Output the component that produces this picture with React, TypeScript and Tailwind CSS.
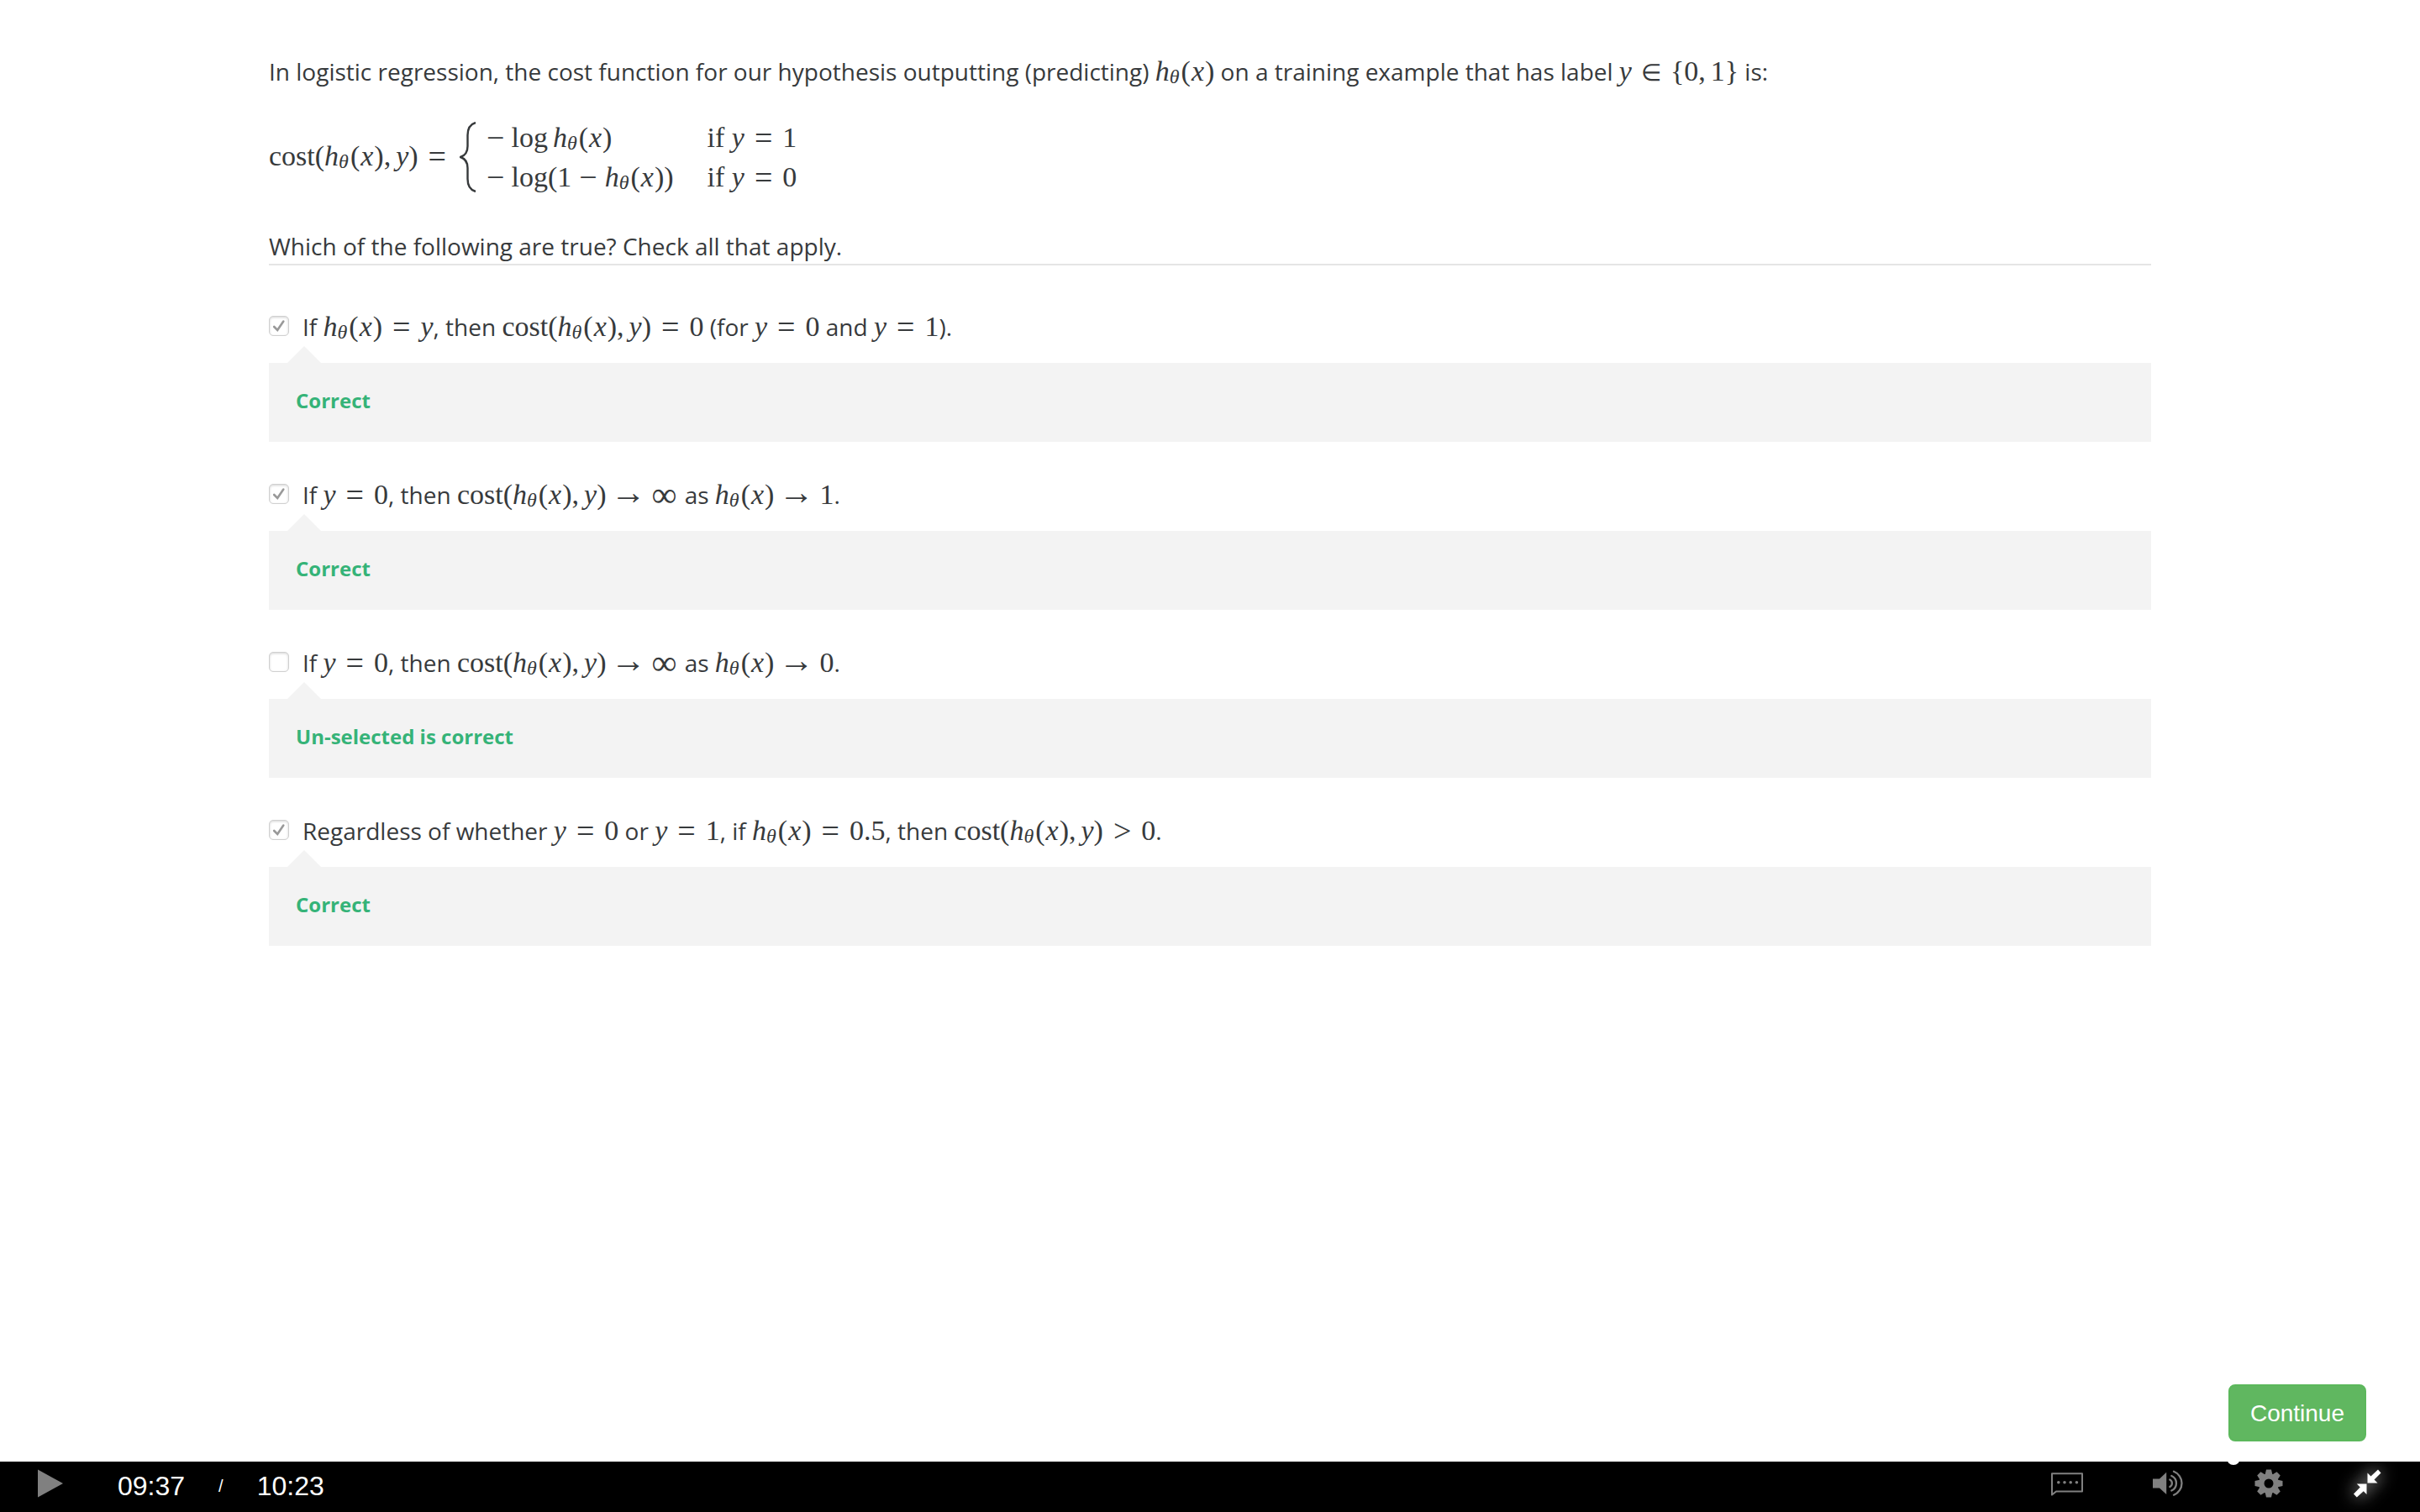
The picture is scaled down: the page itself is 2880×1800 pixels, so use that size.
import React, { useState } from "react";

type Children = { children: React.ReactNode };

const Tex = ({ children }: Children) => (
  <span className="whitespace-nowrap font-['Liberation_Serif',serif] text-[34px] leading-none">{children}</span>
);

const Rel = ({ children }: Children) => (
  <span className="mx-[12px] align-[-2px] text-[38px] leading-[0]">{children}</span>
);

const Arrow = () => <span className="mr-[7px] ml-[5px] text-[42px] leading-[0]">→</span>;

const Infinity = () => <span className="mr-[2px] align-[-3px] text-[42px] leading-[0]">∞</span>;

const Y = () => <i>y</i>;

// h_θ(x)
const Hyp = () => (
  <>
    <i>h</i>
    <sub className="bottom-[-3px] mr-[2px] text-[24px] leading-none italic">θ</sub>(<i className="mx-[1px]">x</i>)
  </>
);

const Cost = () => (
  <>
    cost(
    <Hyp />,<span className="ml-[6px]"><Y /></span>)
  </>
);

const Minus = () => <span className="mr-[8px] align-[-2px] text-[38px] leading-[0]">−</span>;

const Brace = () => (
  <svg className="ml-[16px] mr-[12px] h-[84px] w-[20px] shrink-0" viewBox="0 0 20 84" fill="none" aria-hidden="true">
    <path
      d="M19 1C12 3 9.500 8 9.500 16V29C9.500 36 7 40 1 42C7 44 9.500 48 9.500 55V68C9.500 76 12 81 19 83"
      stroke="#373a3c"
      strokeWidth="2.400"
    />
  </svg>
);

type Option = { id: string; checked: boolean; body: React.ReactNode; feedback: string };

const options: Option[] = [
  {
    id: "a",
    checked: true,
    feedback: "Correct",
    body: (
      <>
        If <Tex><Hyp /><Rel>=</Rel><Y /></Tex>, then <Tex><Cost /><Rel>=</Rel>0</Tex> (for{" "}
        <Tex><Y /><Rel>=</Rel>0</Tex> and <Tex><Y /><Rel>=</Rel>1</Tex>).
      </>
    ),
  },
  {
    id: "b",
    checked: true,
    feedback: "Correct",
    body: (
      <>
        If <Tex><Y /><Rel>=</Rel>0</Tex>, then <Tex><Cost /><Arrow /><Infinity /></Tex> as <Tex><Hyp /><Arrow />1</Tex>.
      </>
    ),
  },
  {
    id: "c",
    checked: false,
    feedback: "Un-selected is correct",
    body: (
      <>
        If <Tex><Y /><Rel>=</Rel>0</Tex>, then <Tex><Cost /><Arrow /><Infinity /></Tex> as <Tex><Hyp /><Arrow />0</Tex>.
      </>
    ),
  },
  {
    id: "d",
    checked: true,
    feedback: "Correct",
    body: (
      <>
        Regardless of whether <Tex><Y /><Rel>=</Rel>0</Tex> or <Tex><Y /><Rel>=</Rel>1</Tex>, if{" "}
        <Tex><Hyp /><Rel>=</Rel>0.5</Tex>, then <Tex><Cost /><Rel>&gt;</Rel>0</Tex>.
      </>
    ),
  },
];

function Answer({ option }: { option: Option }) {
  const [checked, setChecked] = useState(option.checked);
  return (
    <li className="mb-[43px]">
      <div className="flex gap-4">
        <span className="relative mt-[7px] size-6 shrink-0">
          <input
            id={option.id}
            type="checkbox"
            checked={checked}
            onChange={() => setChecked(!checked)}
            className="block size-6 appearance-none rounded-[5px] border border-[#d0d0d0] bg-white shadow-[inset_0_1px_3px_rgba(0,0,0,0.18)]"
          />
          {checked && (
            <svg className="pointer-events-none absolute inset-0 size-6" viewBox="0 0 24 24" fill="none" aria-hidden="true">
              <path d="M6.200 13L10.200 17L17.300 6.500" stroke="#999" strokeWidth="2.600" strokeLinecap="round" />
            </svg>
          )}
        </span>
        <label htmlFor={option.id} className="leading-[40px]">{option.body}</label>
      </div>
      <div className="relative mt-[23px] bg-[#f3f3f3] px-8">
        <svg className="absolute -top-5 left-[22px] h-5 w-10" viewBox="0 0 40 20" fill="#f3f3f3" aria-hidden="true">
          <path d="M0 20L20 0L40 20Z" />
        </svg>
        <p className="pb-1 text-[24px] leading-[90px] font-bold text-[#35b378]">{option.feedback}</p>
      </div>
    </li>
  );
}

const iconButton = "flex h-[52px] w-[120px] items-center justify-center text-[#808080]";

function PlayerBar() {
  return (
    <footer className="relative flex h-[60px] shrink-0 bg-black font-['Liberation_Sans',sans-serif] text-[32px] leading-[58px] text-white">
      <span className="absolute -top-3 left-[92%] size-4 rounded-full bg-white" />
      <button type="button" aria-label="Play" className="flex h-[52px] w-[120px] items-center justify-center text-[#808080]">
        <svg className="h-[34px] w-[30px]" viewBox="0 0 30 34" fill="currentColor" aria-hidden="true">
          <path d="M0 0.500L30 17L0 33.500Z" />
        </svg>
      </button>
      <div className="ml-5 flex">
        <span>09:37</span>
        <span className="mx-10 text-[20px]">/</span>
        <span>10:23</span>
      </div>
      <div className="ml-auto flex">
        <button type="button" aria-label="Subtitles" className={iconButton}>
          <svg className="size-10" viewBox="0 0 40 40" fill="none" aria-hidden="true">
            <path d="M2 8.200H38V29.500H7L2 33.600Z" stroke="currentColor" strokeWidth="2" strokeLinejoin="round" />
            <g fill="currentColor">
              <circle cx="9.800" cy="18.700" r="1.800" />
              <circle cx="17" cy="18.700" r="1.800" />
              <circle cx="24.200" cy="18.700" r="1.800" />
              <circle cx="31.400" cy="18.700" r="1.800" />
            </g>
          </svg>
        </button>
        <button type="button" aria-label="Volume" className={iconButton}>
          <svg className="size-10" viewBox="0 0 40 40" fill="none" aria-hidden="true">
            <path d="M2 14.500H10L18.200 6.800V33L10 25.500H2Z" fill="currentColor" />
            <g stroke="currentColor" strokeWidth="2.300" strokeLinecap="round">
              <path d="M22.300 15.500A4.800 4.800 0 0 1 22.300 24" />
              <path d="M24.300 11A9.600 9.600 0 0 1 24.300 28.500" />
              <path d="M27 5.800A15 15 0 0 1 27 33.700" />
            </g>
          </svg>
        </button>
        <button type="button" aria-label="Settings" className={iconButton}>
          <svg className="size-10" viewBox="-20 -20 40 40" aria-hidden="true">
            <g fill="currentColor">
              {[0, 45, 90, 135].map((a) => (
                <path
                  key={a}
                  transform={`rotate(${a})`}
                  d="M-3 -16.500H3L4.500 -10V10L3 16.500H-3L-4.500 10V-10Z"
                />
              ))}
              <circle r="12" />
            </g>
            <circle r="5.500" fill="#000" />
          </svg>
        </button>
        <button type="button" aria-label="Exit full screen" className={iconButton}>
          <svg
            className="size-10 overflow-visible text-white drop-shadow-[0_0_10px_rgba(255,255,255,0.9)]"
            viewBox="0 0 40 40"
            fill="currentColor"
            aria-hidden="true"
          >
            <path d="M17.500 19.500V7.500L21.500 11.500L30 3.500L33.500 7.500L25.500 15.500L29.500 19.500Z" />
            <path d="M16.500 20.500V33L12.800 29.300L4.800 36.500L1 32.500L8.800 24.500L4.800 20.500Z" />
          </svg>
        </button>
      </div>
    </footer>
  );
}

export default function App() {
  return (
    <div className="flex min-h-screen flex-col bg-white font-['Open_Sans',sans-serif] text-[28px] text-[#373a3c]">
      <main className="flex-1 px-80 pt-[65px]">
        <p className="leading-[40px]">
          In logistic regression, the cost function for our hypothesis outputting (predicting) <Tex><Hyp /></Tex> on a
          training example that has label{" "}
          <Tex><Y /><span className="mx-[11px] text-[28px]">∈</span>{"{"}0,<span className="ml-[6px]">1</span>{"}"}</Tex> is:
        </p>
        <div className="mt-[35px] flex items-center font-['Liberation_Serif',serif] text-[34px] leading-[47px]">
          <span className="pb-1">
            <Cost /><span className="ml-[12px] align-[-2px] text-[38px] leading-[0]">=</span>
          </span>
          <Brace />
          <div className="grid auto-rows-[47px] grid-cols-[auto_auto] gap-x-10">
            <span><Minus />log<span className="ml-[6px]"><Hyp /></span></span>
            <span>if <Y /><Rel>=</Rel>1</span>
            <span><Minus />log(1<span className="mx-[9px] align-[-2px] text-[38px] leading-[0]">−</span><Hyp />)</span>
            <span>if <Y /><Rel>=</Rel>0</span>
          </div>
        </div>
        <p className="mt-[39px] border-b-2 border-[#e5e5e5] pb-px leading-[40px]">
          Which of the following are true? Check all that apply.
        </p>
        <ul className="mt-[53px]">
          {options.map((o) => (
            <Answer key={o.id} option={o} />
          ))}
        </ul>
      </main>
      <div className="flex justify-end pr-16 pb-6">
        <button
          type="button"
          className="rounded-lg border-2 border-[#5cb85c] bg-[#60b760] px-6 pt-[2px] font-['Liberation_Sans',sans-serif] text-[28px] leading-[62px] text-white"
        >
          Continue
        </button>
      </div>
      <PlayerBar />
    </div>
  );
}
